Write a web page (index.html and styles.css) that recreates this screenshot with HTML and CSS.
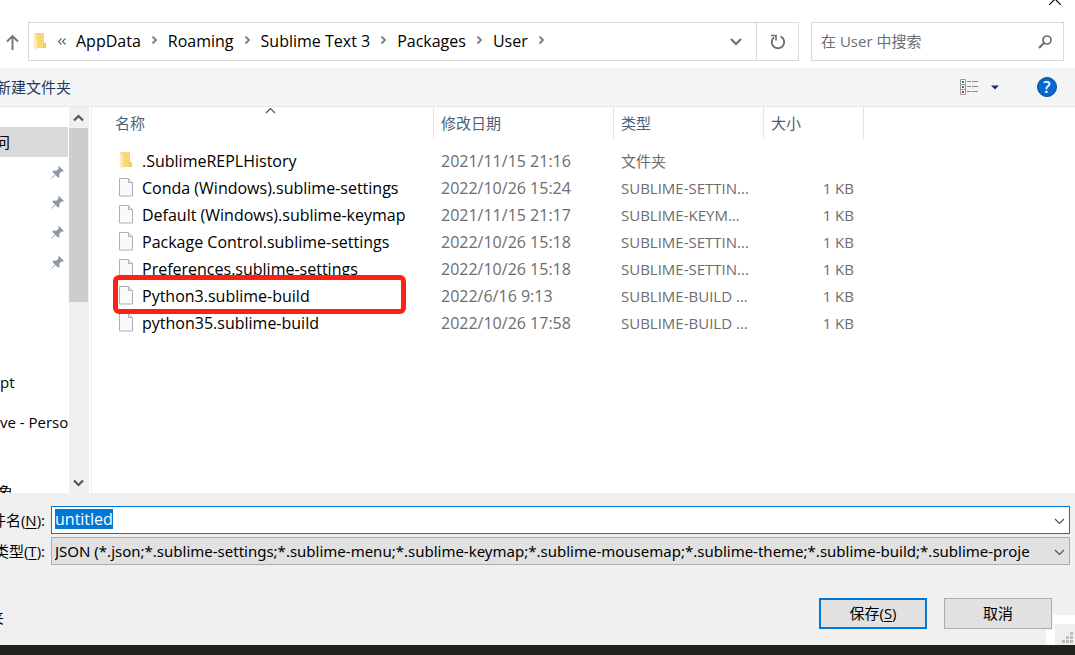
FILE: index.html
```html
<!DOCTYPE html>
<html lang="zh-CN">
<head>
<meta charset="utf-8">
<title>Save As</title>
<link rel="stylesheet" href="styles.css">
</head>
<body>
<svg width="0" height="0" class="defs" aria-hidden="true">
  <symbol id="crumb" viewBox="0 0 7 9"><path d="M1.500.500 5 4 1.500 7.500" fill="none" stroke="#7c7c7c" stroke-width="1.800"/></symbol>
  <symbol id="folder" viewBox="0 0 12 17"><path d="M1 0h9v10h2v5H3v2L0 15V1z" fill="#f8d775"/><path d="M0 1l3 1v15l-3-2z" fill="#fdeab0"/><path d="M9 8v7h3v-5h-2V8z" fill="#f3c95c"/></symbol>
  <symbol id="file" viewBox="0 0 14 19"><path d="M.5.500h9l4 4v13.500H.5z" fill="#f9fafb" stroke="#b0b0b0"/><path d="M9.500.500v4h4" fill="#e6e6e6" stroke="#b0b0b0"/></symbol>
  <symbol id="pin" viewBox="0 0 13 13"><path d="M8 0l5 5-1.500.700-1-.200-2.200 2.200.200 2.800-1.300 1.300L4.500 9.100 1 12.500l-.700.200.200-.700L4 8.500 1.300 5.800 2.600 4.500l2.700.200L7.500 2.500 7.300 1z" fill="#8d9aa5"/></symbol>
  <symbol id="thin-down" viewBox="0 0 11 7"><path d="M1 1l4.500 4.500L10 1" fill="none" stroke="#505050" stroke-width="1.100"/></symbol>
  <symbol id="bold-down" viewBox="0 0 11 8"><path d="M1 1.500l4.500 4.500L10 1.500" fill="none" stroke="#555" stroke-width="2.200"/></symbol>
</svg>
<main class="dialog">
  <header class="nav">
    <button class="close" aria-label="Close"><svg width="12" height="12" viewBox="0 0 12 12"><path d="M0 0l12 12M12 0L0 12" stroke="#000" stroke-width="1.200"/></svg></button>
    <button class="up" aria-label="Up"><svg width="13" height="16" viewBox="0 0 13 16"><path d="M6.500 16V2M1 7.500l5.500-5.500L12 7.500" fill="none" stroke="#757575" stroke-width="1.900"/></svg></button>
    <div class="address">
      <svg class="address-icon" width="12" height="17"><use href="#folder"/></svg>
      <svg class="more" width="8" height="7" viewBox="0 0 8 7"><path d="M3.500.500l-3 3 3 3M7.500.500l-3 3 3 3" fill="none" stroke="#606060" stroke-width="1.100"/></svg>
      <nav class="crumbs">
        <a href="#">AppData</a><svg width="7" height="9"><use href="#crumb"/></svg>
        <a href="#">Roaming</a><svg width="7" height="9"><use href="#crumb"/></svg>
        <a href="#">Sublime Text 3</a><svg width="7" height="9"><use href="#crumb"/></svg>
        <a href="#">Packages</a><svg width="7" height="9"><use href="#crumb"/></svg>
        <a href="#">User</a><svg width="7" height="9"><use href="#crumb"/></svg>
      </nav>
      <button class="history" aria-label="History"><svg width="12" height="8" viewBox="0 0 12 8"><path d="M1 1l5 5 5-5" fill="none" stroke="#707070" stroke-width="2"/></svg></button>
      <button class="refresh" aria-label="Refresh"><svg width="16" height="16" viewBox="0 0 16 16"><path d="M10.500 2.400A6.200 6.200 0 1 1 4 3.300" fill="none" stroke="#707070" stroke-width="1.900"/><path d="M1 1.500h5v5" fill="none" stroke="#707070" stroke-width="1.700"/></svg></button>
    </div>
    <div class="search">
      <input type="text" aria-label="Search" placeholder="在 User 中搜索">
      <svg width="14" height="14" viewBox="0 0 14 14"><circle cx="9" cy="5" r="4" fill="none" stroke="#6c6c6c" stroke-width="1.700"/><path d="M6.200 7.800L1 13" stroke="#6c6c6c" stroke-width="2"/></svg>
    </div>
  </header>

  <div class="toolbar">
    <button class="new-folder">新建文件夹</button>
    <button class="view" aria-label="View"><svg width="18" height="16" viewBox="0 0 18 16"><path d="M.5.500h5v15H.5zM.5 5.500h5M.5 10.500h5" fill="#fff" stroke="#999"/><path d="M7 2.500h4m1 0h6M7 7.500h4m1 0h6M7 12.500h4m1 0h6" stroke="#888"/><path d="M2 2h2v2H2z" fill="#38738c"/><path d="M2 7h2v2H2z" fill="#666"/><path d="M2 12h2v2H2z" fill="#c22b12"/></svg></button>
    <button class="view-menu" aria-label="More views"><svg width="8" height="5" viewBox="0 0 8 5"><path d="M0 .500h8L4 4.500z" fill="#1c3260"/></svg></button>
    <button class="help" aria-label="Help">?</button>
  </div>

  <section class="browser">
    <div class="tree">
      <div class="node selected"><span class="cut cut-s">问</span></div>
      <div class="node"><svg width="13" height="13"><use href="#pin"/></svg></div>
      <div class="node"><svg width="13" height="13"><use href="#pin"/></svg></div>
      <div class="node"><svg width="13" height="13"><use href="#pin"/></svg></div>
      <div class="node"><svg width="13" height="13"><use href="#pin"/></svg></div>
      <div class="node"></div>
      <div class="node"></div>
      <div class="node"></div>
      <div class="node">pt</div>
      <div class="node root">ve - Perso</div>
      <div class="node"></div>
      <div class="node root"><span class="cut cut-m">象</span></div>
    </div>
    <div class="scrollbar">
      <button aria-label="Scroll up"><svg class="flip" width="11" height="8"><use href="#bold-down"/></svg></button>
      <div class="thumb"></div>
      <button aria-label="Scroll down"><svg width="11" height="8"><use href="#bold-down"/></svg></button>
    </div>
    <div class="files">
      <table>
        <colgroup><col class="c-name"><col class="c-date"><col class="c-type"><col class="c-size"></colgroup>
        <thead><tr><th>名称<svg class="sort flip" width="11" height="7"><use href="#thin-down"/></svg></th><th>修改日期</th><th>类型</th><th>大小</th></tr></thead>
        <tbody>
          <tr><td><div class="name"><svg width="14" height="17"><use href="#folder"/></svg>.SublimeREPLHistory</div></td><td class="date">2021/11/15 21:16</td><td>文件夹</td><td></td></tr>
          <tr><td><div class="name"><svg width="14" height="19"><use href="#file"/></svg>Conda (Windows).sublime-settings</div></td><td class="date">2022/10/26 15:24</td><td>SUBLIME-SETTIN...</td><td>1 KB</td></tr>
          <tr><td><div class="name"><svg width="14" height="19"><use href="#file"/></svg>Default (Windows).sublime-keymap</div></td><td class="date">2021/11/15 21:17</td><td>SUBLIME-KEYM...</td><td>1 KB</td></tr>
          <tr><td><div class="name"><svg width="14" height="19"><use href="#file"/></svg>Package Control.sublime-settings</div></td><td class="date">2022/10/26 15:18</td><td>SUBLIME-SETTIN...</td><td>1 KB</td></tr>
          <tr><td><div class="name"><svg width="14" height="19"><use href="#file"/></svg>Preferences.sublime-settings</div></td><td class="date">2022/10/26 15:18</td><td>SUBLIME-SETTIN...</td><td>1 KB</td></tr>
          <tr><td><div class="name marked"><svg width="14" height="19"><use href="#file"/></svg>Python3.sublime-build</div></td><td class="date">2022/6/16 9:13</td><td>SUBLIME-BUILD ...</td><td>1 KB</td></tr>
          <tr><td><div class="name"><svg width="14" height="19"><use href="#file"/></svg>python35.sublime-build</div></td><td class="date">2022/10/26 17:58</td><td>SUBLIME-BUILD ...</td><td>1 KB</td></tr>
        </tbody>
      </table>
    </div>
  </section>

  <form class="form">
    <div class="field">
      <label for="filename"><span>件名(<u>N</u>):</span></label>
      <div class="combo"><input id="filename" type="text" value="untitled" spellcheck="false" autocomplete="off"><svg class="arrow" width="11" height="7"><use href="#thin-down"/></svg></div>
    </div>
    <div class="field">
      <label for="filetype"><span>类型(<u>T</u>):</span></label>
      <div class="combo grey"><select id="filetype"><option>JSON (*.json;*.sublime-settings;*.sublime-menu;*.sublime-keymap;*.sublime-mousemap;*.sublime-theme;*.sublime-build;*.sublime-proje</option></select><svg class="arrow" width="11" height="7"><use href="#thin-down"/></svg></div>
    </div>
    <div class="actions">
      <button type="button" class="hide"><span>夹</span></button>
      <button type="button" class="btn primary">保存(<u>S</u>)</button>
      <button type="button" class="btn">取消</button>
    </div>
    <div class="corner"><svg width="20" height="21" viewBox="0 0 20 21"><path d="M0 0h20v21H0z" fill="#efefef"/><path d="M15 8h3v3h-3zM11 12h3v3h-3zM15 12h3v3h-3zM7 16h3v3H7zM11 16h3v3h-3zM15 16h3v3h-3z" fill="#bdbdbd"/></svg></div>
  </form>
</main>
<script src="main.js"></script>
</body>
</html>
```
FILE: styles.css
```css
*, *::after { box-sizing: border-box; }
body {
  margin: 0;
  background: #fff;
  color: #000;
  font: 15px/20px "Open Sans", "Noto Sans CJK SC", sans-serif;
}
button, input, select { font: inherit; color: inherit; }
button { border: 0; padding: 0; background: none; }
svg { display: block; flex: none; }
u { text-underline-offset: 2px; }
.defs { position: absolute; }
.flip { transform: scaleY(-1); }
.dialog {
  display: flex;
  flex-direction: column;
  height: 100vh;
  border-bottom: 10px solid #21221d;
  overflow: hidden;
}

/* Address row */
.nav { position: relative; display: flex; padding: 22px 11px 7px 6px; }
.close { position: absolute; top: -7px; right: 14px; }
.up { width: 22px; }
.address { flex: 1; display: flex; align-items: center; height: 39px; border: 1px solid #d9d9d9; }
.address-icon { margin-left: 5px; }
.more { margin: 0 10px 0 12px; }
.crumbs { flex: 1; display: flex; align-items: center; gap: 10px; padding-bottom: 2px; font-size: 16px; }
.crumbs a { color: #000; text-decoration: none; }
.history { display: flex; justify-content: center; width: 40px; }
.refresh { display: flex; align-items: center; justify-content: center; width: 42px; height: 37px; border-left: 1px solid #d9d9d9; }
.search { display: flex; align-items: center; width: 253px; margin-left: 12px; padding: 0 11px 0 9px; border: 1px solid #d9d9d9; }
.search input { flex: 1; min-width: 0; padding: 0 0 2px; border: 0; outline: 0; }
.search input::placeholder { color: #6d6d6d; opacity: 1; }

/* Toolbar */
.toolbar { display: flex; align-items: center; height: 39px; padding-right: 18px; background: #f4f5f7; border-bottom: 1px solid #e4e6e8; }
.new-folder { display: flex; justify-content: flex-end; width: 71px; margin-right: auto; color: #1e395b; white-space: nowrap; }
.view-menu { margin: 0 38px 0 13px; }
.help { width: 20px; height: 20px; border: 1px solid #0b4a94; border-radius: 50%; background: #0468cf; color: #fff; font-size: 16px; line-height: 18px; font-weight: 600; }

/* Browser */
.browser { flex: 1; display: flex; min-height: 0; }
.tree { width: 68px; padding-top: 20px; overflow: hidden; }
.node { display: flex; align-items: center; height: 30px; white-space: nowrap; }
.node.selected { background: #d9d9d9; }
.node.root { margin-top: 10px; }
.node svg { margin-left: 51px; }
.cut { display: flex; justify-content: flex-end; }
.cut-s { width: 10px; }
.cut-m { width: 13px; }
.scrollbar { display: flex; flex-direction: column; width: 20px; margin-left: 1px; background: #f0f0f0; }
.scrollbar button { display: flex; align-items: center; justify-content: center; height: 21px; padding-right: 1px; }
.thumb { height: 174px; margin-right: 1px; background: #cdcdcd; }
.scrollbar .thumb + button { margin-top: auto; }
.files { flex: 1; margin-left: 2px; border-left: 1px solid #f2f2f2; overflow: hidden; }
table { table-layout: fixed; width: 772px; border-collapse: separate; border-spacing: 0; }
.c-name { width: 342px; }
.c-date { width: 180px; }
.c-type { width: 150px; }
.c-size { width: 100px; }
th { position: relative; height: 32px; padding: 0 7px; border-right: 1px solid #e5e5e5; color: #4c607a; font-weight: 400; text-align: left; }
th:first-child { padding-left: 23px; }
.sort { position: absolute; top: 0; left: 173px; }
tbody::before { content: ""; display: block; height: 8px; }
td { height: 27px; padding: 0 7px; color: #6d6d6d; white-space: nowrap; }
td:first-child { padding: 0; }
td:last-child { padding-right: 10px; text-align: right; }
.date { font-size: 16px; }
.name { position: relative; display: flex; align-items: center; gap: 9px; padding-left: 27px; color: #000; font-size: 16px; }
.marked::after { content: ""; position: absolute; z-index: 1; top: -11px; left: 21px; width: 293px; height: 39px; border: 5px solid #ff2015; border-radius: 6px; }

/* Form */
.form { position: relative; display: flex; flex-direction: column; gap: 3px; height: 152px; padding: 13px 5px 0 0; background: #f0f0f0; }
.field { display: flex; height: 28px; }
.field label { display: flex; justify-content: flex-end; align-items: center; width: 45px; margin-right: 6px; overflow: hidden; white-space: nowrap; }
.combo { position: relative; flex: 1; display: flex; min-width: 0; border: 1px solid #0078d7; background: #fff; }
.combo.grey { border-color: #adadad; background: #e1e1e1; }
.combo input, .combo select { flex: 1; min-width: 0; margin-right: 22px; padding: 0 0 0 3px; border: 0; outline: 0; background: none; appearance: none; }
.combo select { font-family: "Noto Sans", "Noto Sans CJK SC", sans-serif; }
.combo input { padding-bottom: 2px; font-size: 16px; }
.combo input::selection { background: #0078d7; color: #fff; }
.arrow { position: absolute; top: 11px; right: 4px; pointer-events: none; }
.actions { display: flex; gap: 17px; margin-top: 30px; padding-right: 18px; }
.hide { display: flex; justify-content: flex-end; align-items: center; width: 4px; height: 38px; margin-right: auto; }
.btn { width: 108px; height: 31px; padding-bottom: 2px; border: 1px solid #adadad; background: #e1e1e1; }
.btn.primary { border: 2px solid #0078d7; }
.corner { position: absolute; right: 0; bottom: 0; display: flex; align-items: flex-end; justify-content: flex-end; width: 29px; height: 30px; background: #fff; clip-path: polygon(7px 0, 100% 0, 100% 100%, 0 100%, 0 15px, 7px 15px); }
```
FILE: main.js
```js
const filename = document.getElementById("filename");
filename.focus();
filename.select();
```
